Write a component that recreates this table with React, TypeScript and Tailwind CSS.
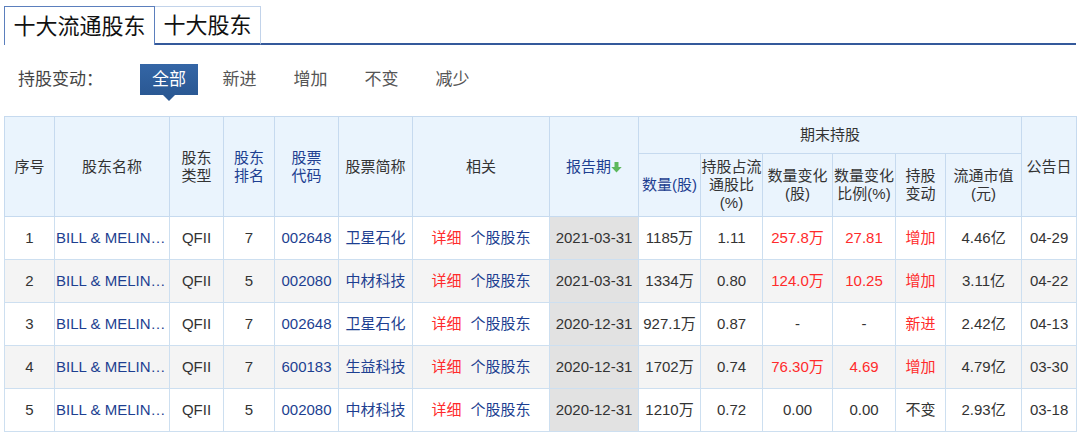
import React from 'react';

type Row = {
    no: number;
    rank: number;
    code: string;
    stock: string;
    date: string;
    qty: string;
    ratio: string;
    chg: string;
    chgPct: string;
    act: string;
    cap: string;
    pub: string;
};

const rows: Row[] = [
    { no: 1, rank: 7, code: '002648', stock: '卫星石化', date: '2021-03-31', qty: '1185万', ratio: '1.11', chg: '257.8万', chgPct: '27.81', act: '增加', cap: '4.46亿', pub: '04-29' },
    { no: 2, rank: 5, code: '002080', stock: '中材科技', date: '2021-03-31', qty: '1334万', ratio: '0.80', chg: '124.0万', chgPct: '10.25', act: '增加', cap: '3.11亿', pub: '04-22' },
    { no: 3, rank: 7, code: '002648', stock: '卫星石化', date: '2020-12-31', qty: '927.1万', ratio: '0.87', chg: '-', chgPct: '-', act: '新进', cap: '2.42亿', pub: '04-13' },
    { no: 4, rank: 7, code: '600183', stock: '生益科技', date: '2020-12-31', qty: '1702万', ratio: '0.74', chg: '76.30万', chgPct: '4.69', act: '增加', cap: '4.79亿', pub: '03-30' },
    { no: 5, rank: 5, code: '002080', stock: '中材科技', date: '2020-12-31', qty: '1210万', ratio: '0.72', chg: '0.00', chgPct: '0.00', act: '不变', cap: '2.93亿', pub: '03-18' },
];

const colWidths = [50, 115, 54, 51, 64, 74, 137, 89, 62, 62, 70, 63, 50, 76, 55];

const th = 'border border-[#c6daef] bg-[#eaf4fd] font-normal text-center align-middle leading-[18px]';
const td = 'border border-[#cddff0] text-center align-middle whitespace-nowrap';

function SortArrow() {
    return (
        <svg width="11" height="11" viewBox="0 0 11 11" className="inline-block align-[-1px]">
            <path d="M3.5 0h4v5h3.2L5.5 10.5 0.3 5h3.2z" fill="#5cb85c" />
        </svg>
    );
}

export default function App() {
    const filters = ['新进', '增加', '不变', '减少'];

    return (
        <div className="w-[1080px] h-[433px] overflow-hidden bg-white font-['Liberation_Sans','Noto_Sans_CJK_SC',sans-serif] text-[#333]">
            {/* tabs */}
            <div className="flex items-end h-[45px] pt-[6px] px-[4px]">
                <div className="h-[39px] w-[151px] border border-b-0 border-[#5b7fbd] flex items-center justify-center text-[22px] text-[#111]">
                    十大流通股东
                </div>
                <div className="h-[39px] w-[106px] border-t border-r border-[#c2d3ea] border-b-2 border-b-[#34599b] flex items-center justify-center text-[22px] text-[#111]">
                    十大股东
                </div>
                <div className="flex-1 h-full border-b-2 border-[#34599b]" />
            </div>

            {/* filter */}
            <div className="flex items-center h-[31px] mt-[19px] text-[17px]">
                <div className="w-[140px] pl-[18px] text-[#444]">持股变动：</div>
                <div className="relative w-[58px] h-[31px] bg-gradient-to-b from-[#3466a6] to-[#2a5893] text-white flex items-center justify-center">
                    全部
                    <span className="absolute left-1/2 -translate-x-1/2 top-full w-0 h-0 border-x-[6px] border-x-transparent border-t-[6px] border-t-[#2a5893]" />
                </div>
                <div className="flex ml-[6px]">
                    {filters.map((f) => (
                        <div key={f} className="w-[71px] text-center text-[#555]">{f}</div>
                    ))}
                </div>
            </div>

            {/* table */}
            <table className="mt-[21px] ml-[4px] w-[1072px] table-fixed border-collapse text-[15px]">
                <colgroup>
                    {colWidths.map((w, i) => (
                        <col key={i} style={{ width: w }} />
                    ))}
                </colgroup>
                <thead>
                    <tr className="h-[37px]">
                        <th rowSpan={2} className={th}>序号</th>
                        <th rowSpan={2} className={th}>股东名称</th>
                        <th rowSpan={2} className={th}>股东<br />类型</th>
                        <th rowSpan={2} className={`${th} text-[#1d3f91]`}>股东<br />排名</th>
                        <th rowSpan={2} className={`${th} text-[#1d3f91]`}>股票<br />代码</th>
                        <th rowSpan={2} className={th}>股票简称</th>
                        <th rowSpan={2} className={th}>相关</th>
                        <th rowSpan={2} className={`${th} text-[#1d3f91]`}>报告期<SortArrow /></th>
                        <th colSpan={6} className={th}>期末持股</th>
                        <th rowSpan={2} className={th}>公告日</th>
                    </tr>
                    <tr className="h-[63px]">
                        <th className={`${th} text-[#1d3f91]`}>数量(股)</th>
                        <th className={th}>持股占流<br />通股比<br />(%)</th>
                        <th className={th}>数量变化<br />(股)</th>
                        <th className={th}>数量变化<br />比例(%)</th>
                        <th className={th}>持股<br />变动</th>
                        <th className={th}>流通市值<br />(元)</th>
                    </tr>
                </thead>
                <tbody>
                    {rows.map((r, i) => {
                        const up = r.act !== '不变';
                        return (
                            <tr key={r.no} className={`h-[43px] ${i % 2 === 1 ? 'bg-[#f4f4f4]' : 'bg-white'}`}>
                                <td className={td}>{r.no}</td>
                                <td className={`${td} text-left pl-[1px] overflow-hidden text-[#1d3f91]`}>BILL &amp; MELIN…</td>
                                <td className={td}>QFII</td>
                                <td className={td}>{r.rank}</td>
                                <td className={`${td} text-[#1d3f91]`}>{r.code}</td>
                                <td className={`${td} text-[#1d3f91]`}>{r.stock}</td>
                                <td className={td}>
                                    <span className="text-[#ff2b2b]">详细</span>
                                    <span className="ml-[9px] text-[#1d3f91]">个股股东</span>
                                </td>
                                <td className={`${td} bg-[#e2e2e2]`}>{r.date}</td>
                                <td className={td}>{r.qty}</td>
                                <td className={td}>{r.ratio}</td>
                                <td className={`${td} ${r.chg !== '0.00' && r.chg !== '-' ? 'text-[#ff2b2b]' : ''}`}>{r.chg}</td>
                                <td className={`${td} ${r.chgPct !== '0.00' && r.chgPct !== '-' ? 'text-[#ff2b2b]' : ''}`}>{r.chgPct}</td>
                                <td className={`${td} ${up ? 'text-[#ff2b2b]' : ''}`}>{r.act}</td>
                                <td className={td}>{r.cap}</td>
                                <td className={td}>{r.pub}</td>
                            </tr>
                        );
                    })}
                </tbody>
            </table>
        </div>
    );
}
